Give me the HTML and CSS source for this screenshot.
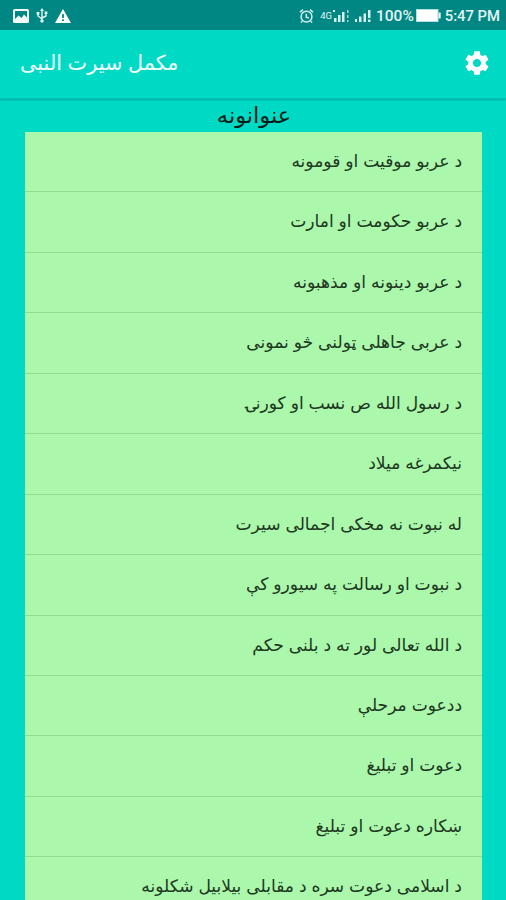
FILE: index.html
```
<!DOCTYPE html>
<html lang="ps">

<head>
    <meta charset="UTF-8">
    <meta name="viewport" content="width=device-width, initial-scale=1.0">
    <title>مکمل سیرت النبی</title>
    <link rel="stylesheet" href="styles.css">
</head>

<body>
    <div class="status-bar">
        <div class="status-left">
            <svg width="16" height="14" viewBox="0 0 16 14">
                <path fill="#f2fbfa" fill-rule="evenodd" d="M1.500 0h13a1.500 1.500 0 0 1 1.500 1.500v11a1.500 1.500 0 0 1-1.500 1.500h-13a1.500 1.500 0 0 1-1.500-1.500v-11a1.500 1.500 0 0 1 1.500-1.500zM2 2v8l3.500-3.500 3 2.500 2.500-3.500 3 3V2z" />
            </svg>
            <svg width="12" height="15" viewBox="0 0 12 15" fill="none" stroke="#e4f4f3" stroke-width="1.400">
                <path d="M6 2v11M2 5.500v2.500l4 3M10 4v4l-4 2" />
                <path fill="#e4f4f3" stroke="none" d="M6 0l2 3H4zM.6 4h2.800v2.500H.6zM8.600 3.500h2.800v2.500H8.600z" />
                <circle cx="6" cy="13" r="1.700" fill="#e4f4f3" stroke="none" />
            </svg>
            <svg width="16" height="14" viewBox="0 0 16 14">
                <path fill="#fff" fill-rule="evenodd" d="M8 0l8 14H0zM7.100 5v4h1.800V5zM7.100 10.300v1.800h1.800v-1.800z" />
            </svg>
        </div>
        <div class="status-right">
            <svg width="15" height="16" viewBox="0 0 16 16" fill="none" stroke="#d5efed" stroke-width="1.600">
                <circle cx="8" cy="8.700" r="5.800" />
                <path d="M1 4l3.200-2.800M15 4l-3.200-2.800M7.800 5.500v3.700l2.700 1M3.500 13.500L2 15M12.500 13.500L14 15" />
            </svg>
            <span class="network">4G</span>
            <svg width="17" height="13" viewBox="0 0 17 13" fill="#d5efed">
                <path d="M0 1h2v2H0zM1 9h2.500v4H1zM5 6h2.500v7H5zM9 3h2.500v10H9z" />
                <path fill="#9dd5d2" d="M14 1h1.500v3H14zM14 6h1.500v3H14zM14 11h1.500v2H14z" />
            </svg>
            <svg class="signal-2" width="17" height="13" viewBox="0 0 17 13" fill="#d5efed">
                <path d="M0 10h2v3H0zM4 7.500h2.500V13H4zM8.500 4.500h2.500v8.500H8.500zM13 1h2.500v8H13zM13 10.500h2.500v2.500H13z" />
            </svg>
            <span class="percent">100%</span>
            <svg class="battery" width="25" height="13" viewBox="0 0 25 13">
                <rect x=".5" y=".5" width="21.500" height="12" fill="#fff" stroke="#b5e0de" />
                <rect x="22.500" y="3.500" width="2.200" height="6" fill="#e4f4f3" />
            </svg>
            <span class="clock">5:47 PM</span>
        </div>
    </div>

    <div class="toolbar">
        <h1 dir="rtl">مکمل سیرت النبی</h1>
        <svg width="28" height="28" viewBox="0 0 24 24" fill="#fff">
            <path d="M19.430 12.980c.04-.32.07-.64.07-.98s-.03-.66-.07-.98l2.110-1.650c.19-.15.24-.42.12-.64l-2-3.460c-.12-.22-.39-.3-.61-.22l-2.490 1c-.52-.4-1.080-.73-1.690-.98l-.38-2.650C14.460 2.180 14.250 2 14 2h-4c-.25 0-.46.18-.49.42l-.38 2.650c-.61.25-1.170.59-1.690.98l-2.490-1c-.23-.09-.49 0-.61.22l-2 3.460c-.13.22-.07.49.12.64l2.110 1.650c-.04.32-.07.65-.07.98s.03.66.07.98l-2.110 1.650c-.19.15-.24.42-.12.64l2 3.460c.12.22.39.3.61.22l2.490-1c.52.4 1.080.73 1.690.98l.38 2.650c.03.24.24.42.49.42h4c.25 0 .46-.18.49-.42l.38-2.650c.61-.25 1.170-.59 1.690-.98l2.490 1c.23.09.49 0 .61-.22l2-3.460c.12-.22.07-.49-.12-.64l-2.110-1.650zM12 15.500c-1.930 0-3.500-1.570-3.500-3.500s1.570-3.500 3.500-3.500 3.500 1.570 3.500 3.500-1.570 3.500-3.500 3.500z" />
        </svg>
    </div>

    <h2 dir="rtl">عنوانونه</h2>
    <ul class="topics" dir="rtl">
        <li>د عربو موقیت او قومونه</li>
        <li>د عربو حکومت او امارت</li>
        <li>د عربو دینونه او مذهبونه</li>
        <li>د عربی جاهلی ټولنی څو نمونی</li>
        <li>د رسول الله ص نسب او کورنۍ</li>
        <li>نیکمرغه میلاد</li>
        <li>له نبوت نه مخکی اجمالی سیرت</li>
        <li>د نبوت او رسالت په سیورو کې</li>
        <li>د الله تعالی لور ته د بلنی حکم</li>
        <li>ددعوت مرحلې</li>
        <li>دعوت او تبلیغ</li>
        <li>ښکاره دعوت او تبلیغ</li>
        <li>د اسلامی دعوت سره د مقابلی بیلابیل شکلونه</li>
    </ul>
</body>

</html>
```
FILE: styles.css
```
body {
    margin: 0;
    height: 900px;
    overflow: hidden;
    background-color: #00dac5;
    font-family: "DejaVu Sans", sans-serif;
}

.status-bar {
    display: flex;
    justify-content: space-between;
    align-items: center;
    height: 30px;
    padding: 1px 6px 0 13px;
    box-sizing: border-box;
    background-color: #008784;
    color: #e4f4f3;
    font-family: Roboto, sans-serif;
    font-size: 15.500px;
    font-weight: 500;
}

.status-left,
.status-right {
    display: flex;
    align-items: center;
}

.status-left {
    gap: 7px;
}

.network {
    margin: 0 1px 0 6px;
    font-size: 9.500px;
    font-weight: normal;
}

.signal-2 {
    margin: 0 4px 0 5px;
}

.battery {
    margin: 0 4px 0 2px;
}

.clock {
    font-size: 14.800px;
}

.toolbar {
    display: flex;
    justify-content: space-between;
    align-items: center;
    height: 69px;
    padding: 0 15px 2px 20px;
    box-sizing: border-box;
    border-bottom: 1px solid #00c4b3;
    box-shadow: 0 1px 2px #00a79b;
}

h1 {
    margin: 0;
    color: #f0fffc;
    font-size: 20.800px;
    font-weight: normal;
    word-spacing: -1px;
}

h2 {
    margin: 0;
    height: 33px;
    line-height: 32px;
    padding-left: 2px;
    text-align: center;
    color: #021e1b;
    font-size: 22.500px;
    font-weight: normal;
}

.topics {
    margin: 0 24px 0 25px;
    padding: 0;
    list-style: none;
    background-color: #abf7ab;
}

.topics li {
    height: 60.450px;
    padding: 0 20px;
    box-sizing: border-box;
    border-bottom: 1px solid #94d994;
    line-height: 59px;
    color: #20381f;
    font-size: 17.100px;
    word-spacing: -.5px;
    white-space: nowrap;
}
```
